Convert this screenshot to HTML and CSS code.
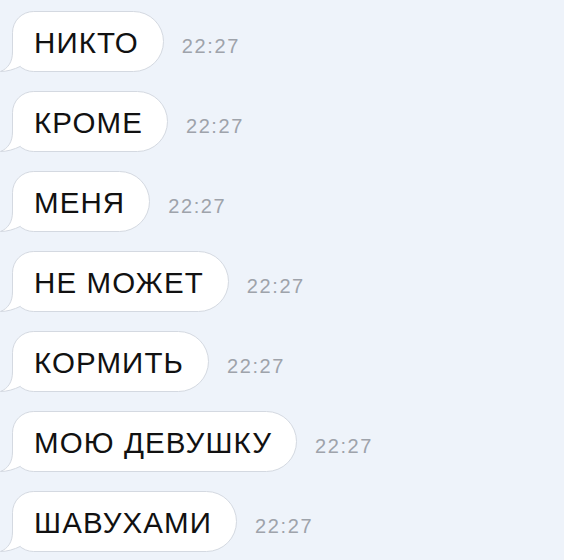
FILE: index.html
```html
<!DOCTYPE html>
<html lang="ru">
<head>
    <meta charset="UTF-8">
    <meta name="viewport" content="width=device-width, initial-scale=1.0">
    <title>Сообщения</title>
    <link rel="stylesheet" href="styles.css">
</head>
<body>
    <div class="chat">
        <div class="row">
            <div class="bubble">
                <svg class="tail" viewBox="0 0 30 30"><path class="tail-fill" d="M12.5 0 L12.5 10 C12.5 20 8 26.5 0.5 29.5 C7 29.5 14 27.5 20.5 24.3 L25 24.3 L25 0 Z"/><path class="tail-line" d="M12.5 0 L12.5 10 C12.5 20 8 26.5 0.5 29.5 C7 29.5 14 27.5 20.5 24.3"/></svg>
                <span class="text">НИКТО</span>
            </div>
            <span class="time">22:27</span>
        </div>
        <div class="row">
            <div class="bubble">
                <svg class="tail" viewBox="0 0 30 30"><path class="tail-fill" d="M12.5 0 L12.5 10 C12.5 20 8 26.5 0.5 29.5 C7 29.5 14 27.5 20.5 24.3 L25 24.3 L25 0 Z"/><path class="tail-line" d="M12.5 0 L12.5 10 C12.5 20 8 26.5 0.5 29.5 C7 29.5 14 27.5 20.5 24.3"/></svg>
                <span class="text">КРОМЕ</span>
            </div>
            <span class="time">22:27</span>
        </div>
        <div class="row">
            <div class="bubble">
                <svg class="tail" viewBox="0 0 30 30"><path class="tail-fill" d="M12.5 0 L12.5 10 C12.5 20 8 26.5 0.5 29.5 C7 29.5 14 27.5 20.5 24.3 L25 24.3 L25 0 Z"/><path class="tail-line" d="M12.5 0 L12.5 10 C12.5 20 8 26.5 0.5 29.5 C7 29.5 14 27.5 20.5 24.3"/></svg>
                <span class="text">МЕНЯ</span>
            </div>
            <span class="time">22:27</span>
        </div>
        <div class="row">
            <div class="bubble">
                <svg class="tail" viewBox="0 0 30 30"><path class="tail-fill" d="M12.5 0 L12.5 10 C12.5 20 8 26.5 0.5 29.5 C7 29.5 14 27.5 20.5 24.3 L25 24.3 L25 0 Z"/><path class="tail-line" d="M12.5 0 L12.5 10 C12.5 20 8 26.5 0.5 29.5 C7 29.5 14 27.5 20.5 24.3"/></svg>
                <span class="text">НЕ МОЖЕТ</span>
            </div>
            <span class="time">22:27</span>
        </div>
        <div class="row">
            <div class="bubble">
                <svg class="tail" viewBox="0 0 30 30"><path class="tail-fill" d="M12.5 0 L12.5 10 C12.5 20 8 26.5 0.5 29.5 C7 29.5 14 27.5 20.5 24.3 L25 24.3 L25 0 Z"/><path class="tail-line" d="M12.5 0 L12.5 10 C12.5 20 8 26.5 0.5 29.5 C7 29.5 14 27.5 20.5 24.3"/></svg>
                <span class="text">КОРМИТЬ</span>
            </div>
            <span class="time">22:27</span>
        </div>
        <div class="row">
            <div class="bubble">
                <svg class="tail" viewBox="0 0 30 30"><path class="tail-fill" d="M12.5 0 L12.5 10 C12.5 20 8 26.5 0.5 29.5 C7 29.5 14 27.5 20.5 24.3 L25 24.3 L25 0 Z"/><path class="tail-line" d="M12.5 0 L12.5 10 C12.5 20 8 26.5 0.5 29.5 C7 29.5 14 27.5 20.5 24.3"/></svg>
                <span class="text">МОЮ ДЕВУШКУ</span>
            </div>
            <span class="time">22:27</span>
        </div>
        <div class="row">
            <div class="bubble">
                <svg class="tail" viewBox="0 0 30 30"><path class="tail-fill" d="M12.5 0 L12.5 10 C12.5 20 8 26.5 0.5 29.5 C7 29.5 14 27.5 20.5 24.3 L25 24.3 L25 0 Z"/><path class="tail-line" d="M12.5 0 L12.5 10 C12.5 20 8 26.5 0.5 29.5 C7 29.5 14 27.5 20.5 24.3"/></svg>
                <span class="text">ШАВУХАМИ</span>
            </div>
            <span class="time">22:27</span>
        </div>
    </div>
</body>
</html>
```

FILE: styles.css
```css
body {
    margin: 0;
    background-color: #eef3fa;
    font-family: "Liberation Sans", Arial, sans-serif;
}
.chat {
    display: flex;
    flex-direction: column;
    gap: 19px;
    padding: 11px 0 0 12px;
}
.row {
    display: flex;
    align-items: baseline;
    gap: 18px;
}
.bubble {
    position: relative;
    height: 61px;
    box-sizing: border-box;
    display: flex;
    align-items: center;
    padding: 3px 24px 0 21px;
    background-color: #fff;
    border: 1px solid #d4d9e1;
    border-radius: 22px 31px 31px 22px;
    font-size: 29.5px;
    letter-spacing: 1.1px;
    color: #111;
}
.tail {
    position: absolute;
    left: -13px;
    bottom: -1px;
    width: 30px;
    height: 30px;
}
.tail-fill {
    fill: #fff;
}
.tail-line {
    fill: none;
    stroke: #d4d9e1;
    stroke-width: 1;
}
.text {
    position: relative;
}
.time {
    font-size: 20px;
    letter-spacing: 1.6px;
    color: #9ea3ab;
}
```
